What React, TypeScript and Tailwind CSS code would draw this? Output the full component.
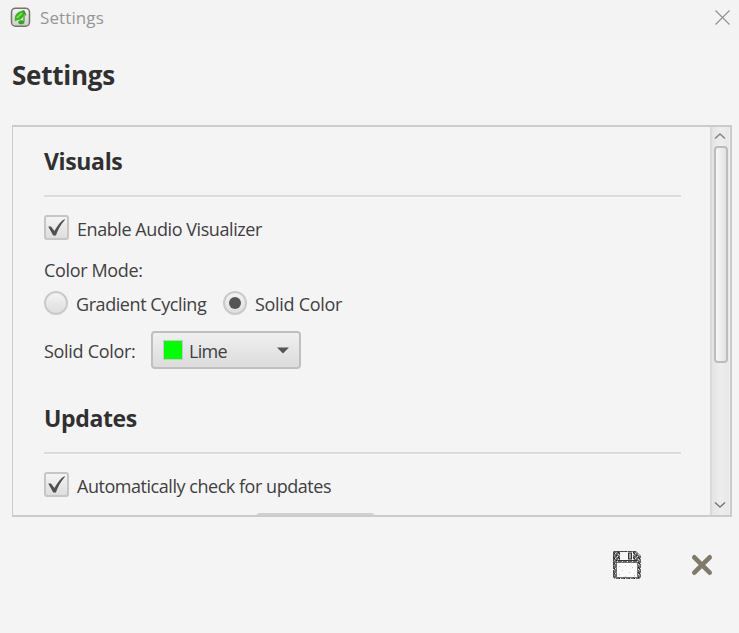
import type { ReactNode } from "react";

function Check() {
  return (
    <span className="flex h-[25px] w-[25px] shrink-0 items-center justify-center rounded-[3px] border-2 border-[#c6c6c6] bg-linear-to-b from-[#f4f4f4] to-[#dedede]">
      <svg className="shrink-0" width="21" height="21" viewBox="0 0 21 21">
        <path d="M2.2 9.6 L5 9.6 L8.4 14 C11.4 8.5 14.8 4 18.6 1.9 L18.8 3 C14.8 7.3 12 12.8 9.9 18.6 L7.2 18.6 Z" fill="#505050" />
      </svg>
    </span>
  );
}

function Radio({ on = false }: { on?: boolean }) {
  return (
    <span className="flex h-6 w-6 shrink-0 items-center justify-center rounded-full border-2 border-[#cacaca] bg-linear-to-b from-[#f3f3f3] to-[#dedede]">
      {on && <span className="h-3 w-3 rounded-full bg-[#555555]" />}
    </span>
  );
}

function Section({ title, children }: { title: string; children: ReactNode }) {
  return (
    <section className="h-[257px]">
      <h2 className="h-8 text-[23px] leading-8 font-bold tracking-[-0.35px] text-[#303030]">{title}</h2>
      <div className="mt-[18px] h-[3px] border-t-2 border-b border-t-[#dcdcdc] border-b-[#f8f8f8]" />
      {children}
    </section>
  );
}

export default function App() {
  return (
    <div className="h-[633px] w-[739px] overflow-hidden bg-[#f4f4f4] font-['Open_Sans',sans-serif] text-[18px] text-[#404040]">
      <header className="flex h-10 items-start bg-[#f3f3f3] pl-[10px]">
        <svg className="mt-[7px]" width="21" height="21" viewBox="0 0 21 21">
          <defs>
            <linearGradient id="tile" x2="0" y2="1">
              <stop stopColor="#f4f4f4" />
              <stop offset="1" stopColor="#d0cecc" />
            </linearGradient>
          </defs>
          <rect x="1.5" y="1.2" width="18" height="18" rx="4" fill="url(#tile)" stroke="#77736f" strokeWidth="1.5" />
          <path d="M5 14.5 C3.8 7 7.5 5 14 3 C14.5 8 13 13 7 13.2 Z" fill="#35b91b" />
          <path d="M6.8 11 L12 6" stroke="#92e066" strokeWidth="1.6" />
          <path d="M14 3.5 V14.5 M14 4 L16 8.5" stroke="#2f9c1b" strokeWidth="1.2" fill="none" />
          <ellipse cx="11.3" cy="15.2" rx="3" ry="2" fill="#31aa19" />
        </svg>
        <span className="mt-[6px] ml-[9px] text-[17px] leading-6 tracking-[0.1px] text-[#969696]">Settings</span>
        <svg className="mt-[9px] mr-2 ml-auto" width="17" height="17" viewBox="0 0 17 17">
          <path d="M1.5 1.5 L15.5 15.5 M15.5 1.5 L1.5 15.5" stroke="#929292" strokeWidth="1.2" />
        </svg>
      </header>

      <h1 className="ml-3 h-[85px] pt-[17px] text-[26px] leading-9 font-bold tracking-[-0.25px] text-[#303030]">Settings</h1>

      <main className="ml-3 flex h-[392px] w-[720px] border-2 border-l border-[#cbcbcb]">
        <div className="h-[388px] min-w-0 flex-1 overflow-hidden pt-[18px] pr-[29px] pl-[31px]">
          <Section title="Visuals">
            <div className="mt-[17px] flex h-[25px] items-center gap-2">
              <Check />
              <span className="pt-1 tracking-[-0.43px]">Enable Audio Visualizer</span>
            </div>
            <div className="mt-[18px] h-6 leading-6 tracking-[-0.35px]">Color Mode:</div>
            <div className="mt-[9px] flex h-6 items-center">
              <Radio />
              <span className="ml-2 w-[147px] pt-[2px] tracking-[-0.43px]">Gradient Cycling</span>
              <Radio on />
              <span className="ml-2 pt-[2px] tracking-[-0.3px]">Solid Color</span>
            </div>
            <div className="mt-4 flex h-[38px] items-center">
              <span className="w-[107px] pt-[2px] tracking-[-0.3px]">Solid Color:</span>
              <span className="flex h-[38px] w-[150px] items-center rounded-[4px] border-2 border-[#bfbfbf] bg-linear-to-b from-[#f0f0f0] to-[#dcdcdc] pl-[10px]">
                <span className="h-5 w-5 border border-[#c8c8c8] bg-[#00ff00]" />
                <span className="ml-[6px] pt-[2px] tracking-[-0.7px]">Lime</span>
                <svg className="mr-[10px] ml-auto" width="12" height="7" viewBox="0 0 12 7">
                  <path d="M0 .5 H12 L6 6.5 Z" fill="#555555" />
                </svg>
              </span>
            </div>
          </Section>
          <Section title="Updates">
            <div className="mt-[17px] flex h-[25px] items-center gap-2">
              <Check />
              <span className="pt-1 tracking-[-0.46px]">Automatically check for updates</span>
            </div>
            <div className="mt-4 ml-[212px] h-9 w-[119px] rounded-[4px] border-2 border-[#d0d0d0] bg-[#eeeeee]" />
          </Section>
        </div>
        <div className="flex h-[388px] w-5 flex-col items-center border-r border-l-2 border-r-[#f0f0f0] border-l-[#dadada] bg-linear-to-r from-[#e4e4e4] via-[#ededed] to-[#e8e8e8]">
          <svg className="mt-[5px] mr-px shrink-0" width="12" height="8" viewBox="0 0 12 8">
            <path d="M1 6.5 L6 2 L11 6.5" fill="none" stroke="#848484" strokeWidth="1.5" />
          </svg>
          <span className="mt-[6px] h-[217px] w-[14px] shrink-0 rounded-[4px] border-2 border-[#bcbcbc] bg-linear-to-r from-[#f8f8f8] to-[#e2e2e2]" />
          <svg className="mt-auto mr-px mb-[6px] shrink-0" width="12" height="8" viewBox="0 0 12 8">
            <path d="M1 1.5 L6 6 L11 1.5" fill="none" stroke="#777777" strokeWidth="1.5" />
          </svg>
        </div>
      </main>

      <footer className="flex items-start pt-[33px] pl-[612px]">
        <svg width="30" height="30" viewBox="0 0 30 30">
          <defs>
            <pattern id="grain" width="5" height="5" patternUnits="userSpaceOnUse">
              <rect width="5" height="5" fill="#686868" />
              <path d="M0 1.5h1M3 3.5h1M1 4.5h1" stroke="#e0e0e0" />
              <path d="M2 .5h1M4 2.5h1" stroke="#a0a0a0" />
              <path d="M1 2.5h1M4 .5h1M2 3.5h1" stroke="#222222" />
            </pattern>
          </defs>
          <path d="M2 1 H24 L29 6 V27 L27 29 H3 L1 27 V2 Z" fill="url(#grain)" />
          <path d="M1.5 27 V2 L3 1.5 H24" fill="none" stroke="#444444" strokeDasharray="3 1" />
          <path d="M6 10.5 H24" stroke="#333333" />
          <rect x="8" y="2" width="13" height="8" fill="#f7f7f7" />
          <rect x="16.5" y="3" width="3" height="6" fill="#aaaaaa" stroke="#333333" />
          <rect x="4.5" y="12.5" width="21" height="15" fill="#fafafa" stroke="#444444" strokeWidth=".6" />
          <path d="M7 16.5h1M13 15.5h1M20 17.5h1M10 20.5h1M17 22.5h1M7 24.5h1M22 25.5h1M13 26.5h1" stroke="#c4c4c4" />
        </svg>
        <svg className="mt-1 ml-[49px]" width="22" height="22" viewBox="0 0 22 22">
          <path d="M3.3 3.3 L18.7 18.7 M18.7 3.3 L3.3 18.7" stroke="#817969" strokeWidth="4.6" strokeLinecap="round" />
        </svg>
      </footer>
    </div>
  );
}
